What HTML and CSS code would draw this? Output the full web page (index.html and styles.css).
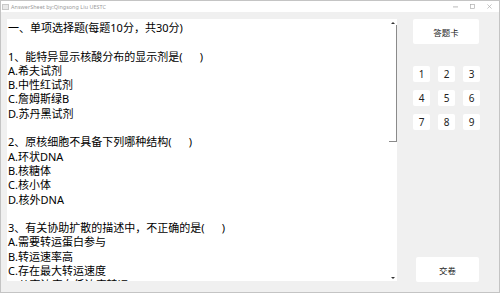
FILE: index.html
```
<!DOCTYPE html>
<html lang="zh-CN">
<head>
  <title>AnswerSheet</title>
  <meta charset="utf-8">
  <link rel="stylesheet" href="styles.css">
</head>
<body>
  <div class="window">
    <div class="titlebar">
      <span class="app-icon"></span>
      <span class="title">AnswerSheet by:Qingsong Liu UESTC</span>
      <div class="controls">
        <svg width="6" height="6" viewBox="0 0 6 6"><path d="M0 3.5h6" stroke="#999" stroke-width="0.8"/></svg>
        <svg width="6" height="6" viewBox="0 0 6 6"><rect x="0.5" y="0.5" width="5" height="5" fill="none" stroke="#aaa" stroke-width="0.8"/></svg>
        <svg width="6" height="6" viewBox="0 0 6 6"><path d="M0.5 0.5l5 5M5.5 0.5l-5 5" stroke="#aaa" stroke-width="0.8"/></svg>
      </div>
    </div>
    <div class="main">
      <div class="paper">
        <div class="text">一、单项选择题(每题10分，共30分)

1、能特异显示核酸分布的显示剂是(      )
A.希夫试剂
B.中性红试剂
C.詹姆斯绿B
D.苏丹黑试剂

2、原核细胞不具备下列哪种结构(      )
A.环状DNA
B.核糖体
C.核小体
D.核外DNA

3、有关协助扩散的描述中，不正确的是(      )
A.需要转运蛋白参与
B.转运速率高
C.存在最大转运速度
D.从高浓度向低浓度转运</div>
        <div class="scrollbar">
          <span class="arrow arrow-up"></span>
          <span class="thumb"></span>
          <span class="arrow arrow-down"></span>
        </div>
      </div>
      <div class="side">
        <button class="button button-wide">答题卡</button>
        <div class="numbers">
          <button class="button">1</button>
          <button class="button">2</button>
          <button class="button">3</button>
          <button class="button">4</button>
          <button class="button">5</button>
          <button class="button">6</button>
          <button class="button">7</button>
          <button class="button">8</button>
          <button class="button">9</button>
        </div>
        <button class="button button-submit">交卷</button>
      </div>
    </div>
  </div>
</body>
</html>
```

FILE: styles.css
```
*, *::before, *::after {
  margin: 0;
  padding: 0;
  box-sizing: border-box;
}

body {
  width: 500px;
  height: 293px;
  overflow: hidden;
  font-family: "Noto Sans", "Noto Sans CJK SC", sans-serif;
  color: #000000;
}

.window {
  width: 500px;
  height: 293px;
  display: flex;
  flex-direction: column;
  border: 1px solid #c4c4c4;
  background-color: #F0F0F0;
}

.titlebar {
  height: 11px;
  display: flex;
  align-items: center;
  padding-left: 1px;
  background-color: #FFFFFF;
}

.app-icon {
  width: 7px;
  height: 6px;
  margin-right: 2px;
  border: 1px solid #c8c8c8;
  background-color: #e8e8e8;
}

.title {
  font-size: 5.4px;
  color: #9a9a9a;
  letter-spacing: 0.05px;
}

.controls {
  margin-left: auto;
  margin-right: 7px;
  display: flex;
  gap: 12px;
}

.controls svg {
  display: block;
  width: 5px;
  height: 5px;
}

.main {
  flex: 1;
  display: flex;
  align-items: flex-start;
  padding: 7px 0 0 6px;
}

.paper {
  width: 390px;
  height: 262px;
  display: flex;
  background-color: #FFFFFF;
  overflow: hidden;
}

.text {
  flex: 1;
  padding: 2px 0 0 1px;
  white-space: pre;
  font-size: 11px;
  line-height: 14.3px;
  overflow: hidden;
}

.scrollbar {
  width: 8px;
  display: flex;
  flex-direction: column;
  align-items: center;
  padding: 3px 0 2px;
}

.arrow {
  width: 0;
  height: 0;
  margin-right: 1px;
  border-left: 2px solid transparent;
  border-right: 2px solid transparent;
}

.arrow-up {
  border-bottom: 2px solid #333333;
}

.arrow-down {
  margin-top: auto;
  border-top: 2px solid #333333;
}

.thumb {
  align-self: stretch;
  height: 117px;
  margin-top: 1px;
  border-right: 1px solid #8a8a8a;
  border-bottom: 1px solid #8a8a8a;
}

.side {
  width: 67px;
  height: 263px;
  margin-left: 16px;
  display: flex;
  flex-direction: column;
}

.button {
  border: none;
  border-radius: 2px;
  background-color: #FFFFFF;
  color: #222222;
  font-family: inherit;
  font-size: 10px;
}

.button-wide {
  width: 66px;
  height: 25px;
  font-size: 8.5px;
}

.numbers {
  margin-top: 22px;
  display: grid;
  grid-template-columns: repeat(3, 17px);
  grid-auto-rows: 16px;
  column-gap: 8px;
  row-gap: 8px;
}

.button-submit {
  width: 63px;
  height: 25px;
  margin-top: auto;
  align-self: flex-end;
  margin-right: 1px;
  font-size: 8.5px;
}
```
